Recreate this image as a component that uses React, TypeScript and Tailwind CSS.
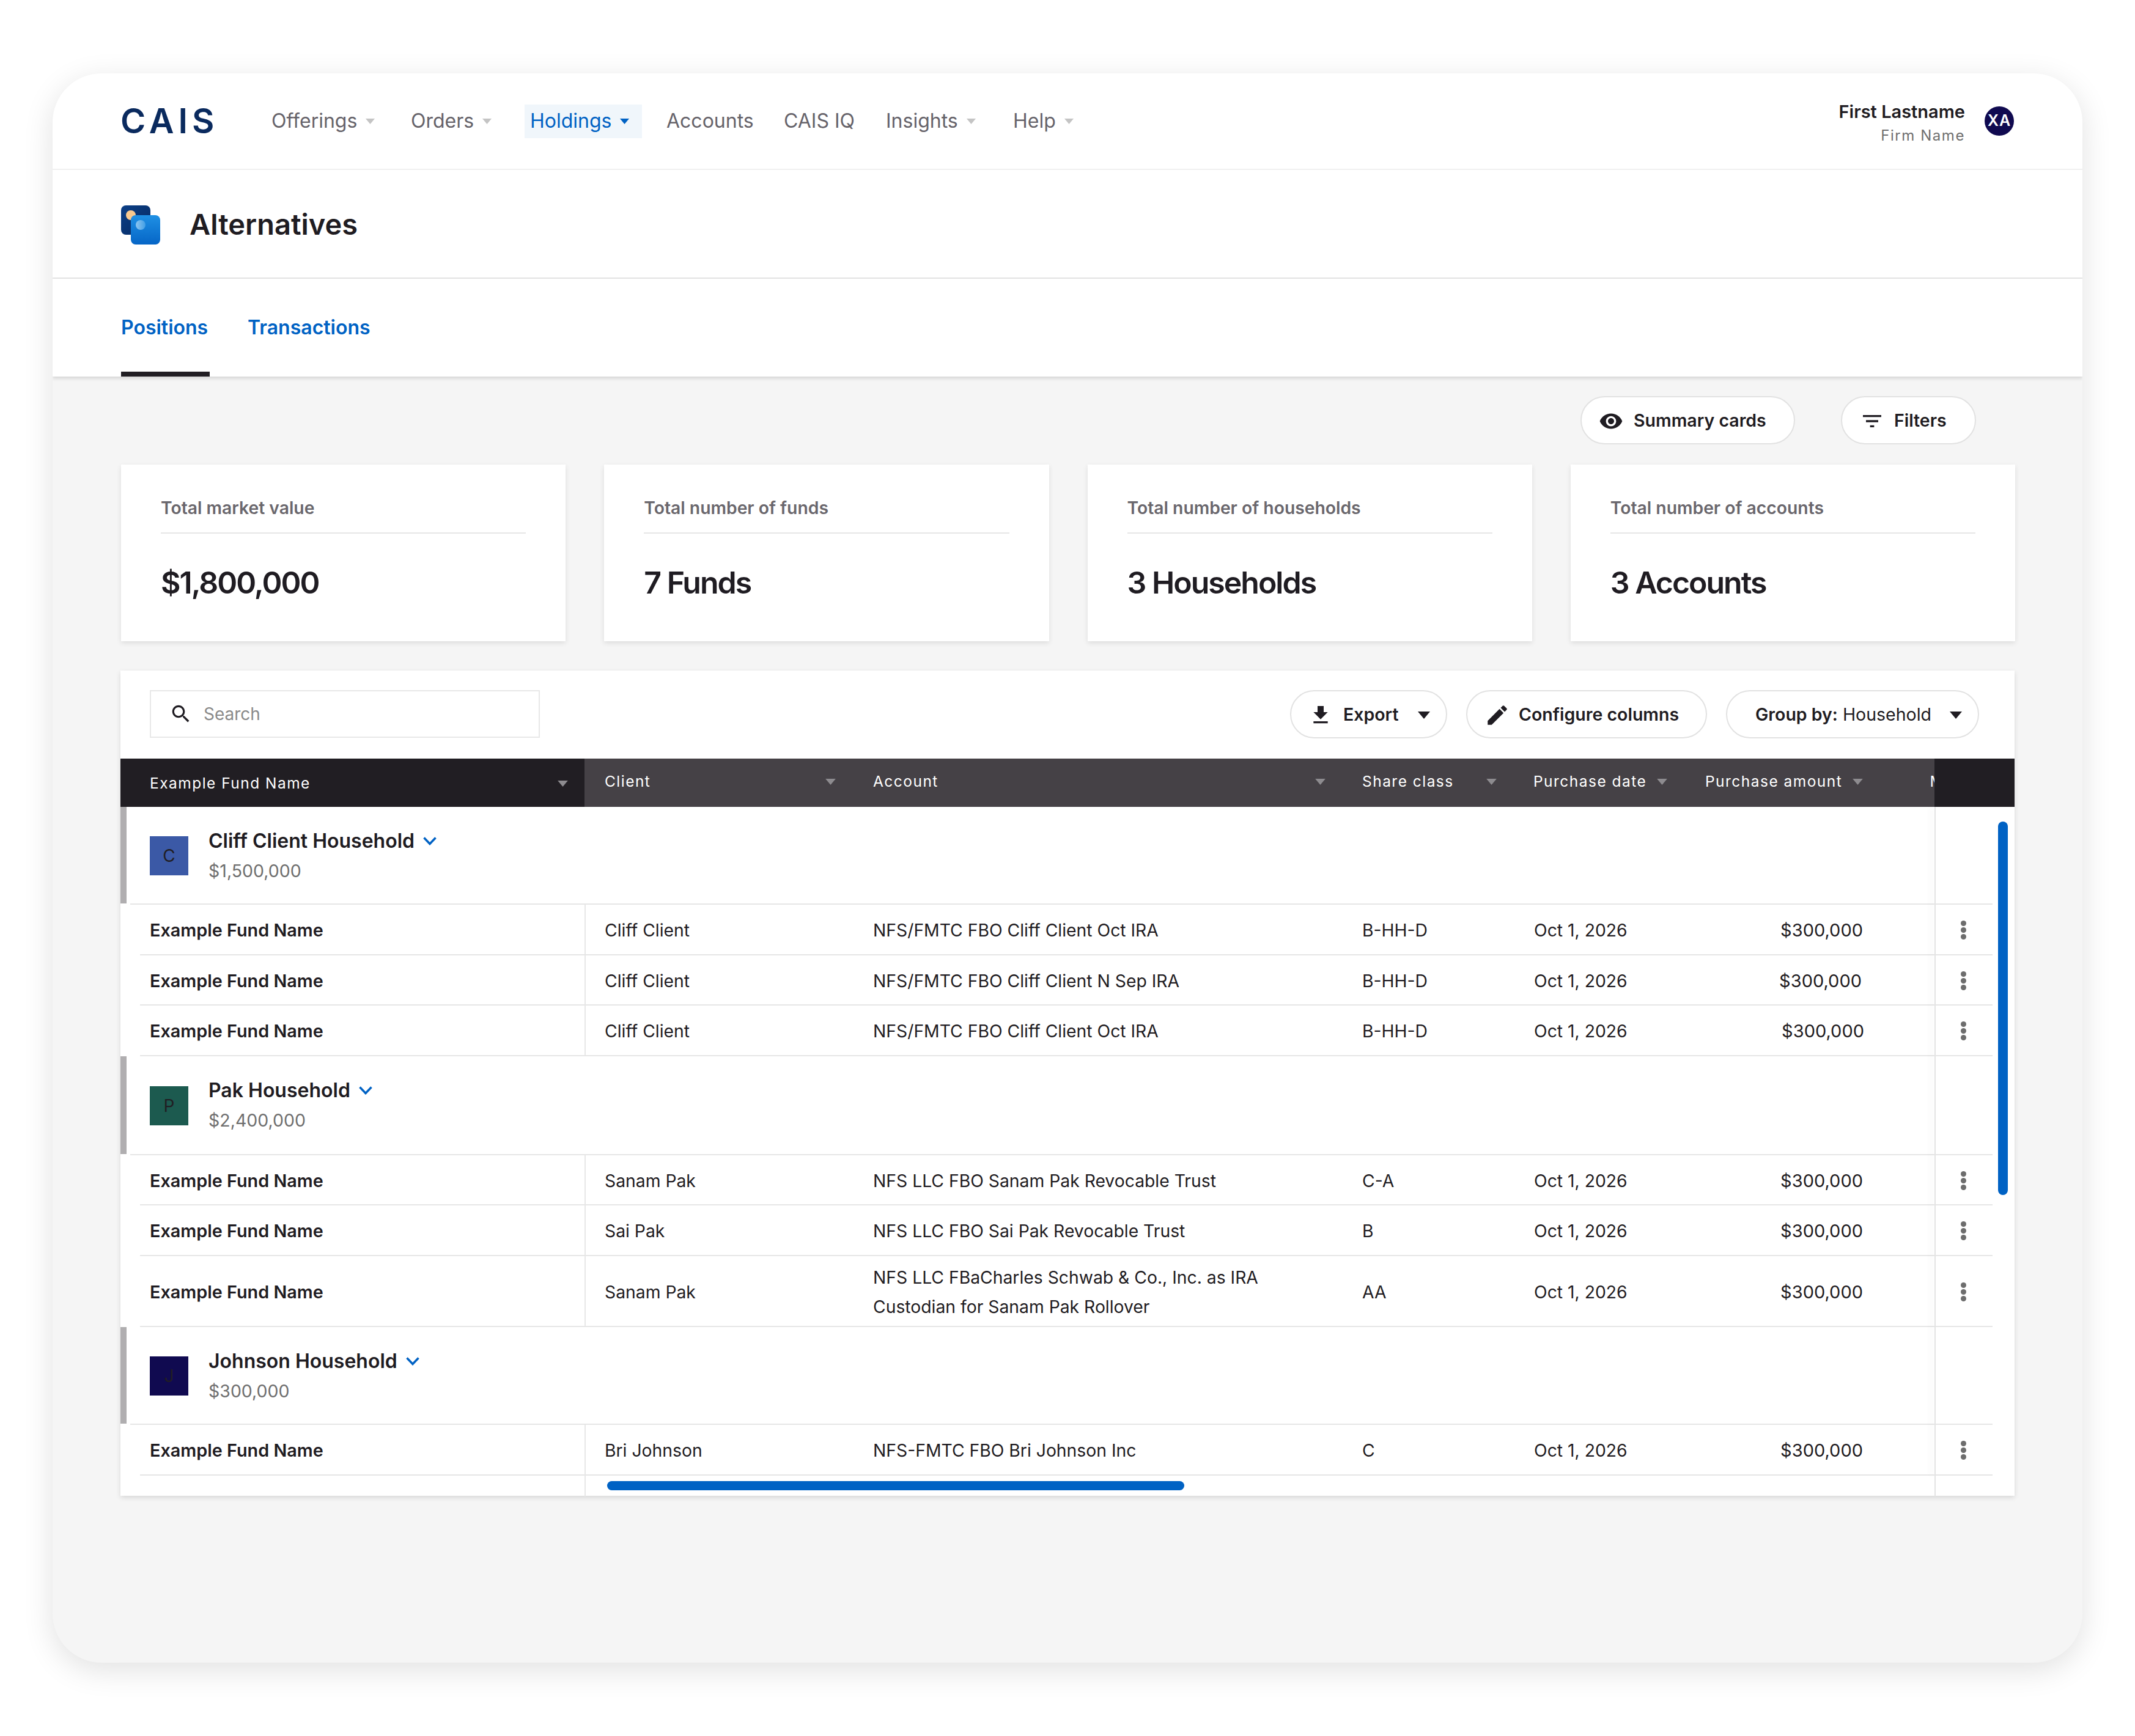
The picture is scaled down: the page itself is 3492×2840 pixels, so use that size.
import { ReactNode } from "react";

const households = [
  {
    initial: "C",
    name: "Cliff Client Household",
    total: "$1,500,000",
    swatch: "bg-[#3b59a6]",
    height: "h-[158px]",
    rows: [
      { client: "Cliff Client", account: "NFS/FMTC FBO Cliff Client Oct IRA", share: "B-HH-D" },
      {
        client: "Cliff Client",
        account: "NFS/FMTC FBO Cliff Client N Sep IRA",
        share: "B-HH-D",
        amountPad: "pr-[17px]",
      },
      {
        client: "Cliff Client",
        account: "NFS/FMTC FBO Cliff Client Oct IRA",
        share: "B-HH-D",
        amountPad: "pr-[13px]",
      },
    ],
  },
  {
    initial: "P",
    name: "Pak Household",
    total: "$2,400,000",
    swatch: "bg-[#1c5a4f]",
    height: "h-[160px]",
    rows: [
      { client: "Sanam Pak", account: "NFS LLC FBO Sanam Pak Revocable Trust", share: "C-A" },
      { client: "Sai Pak", account: "NFS LLC FBO Sai Pak Revocable Trust", share: "B" },
      {
        client: "Sanam Pak",
        account: "NFS LLC FBaCharles Schwab & Co., Inc. as IRA Custodian for Sanam Pak Rollover",
        share: "AA",
        tall: true,
      },
    ],
  },
  {
    initial: "J",
    name: "Johnson Household",
    total: "$300,000",
    swatch: "bg-[#100a50]",
    height: "h-[158px]",
    rows: [{ client: "Bri Johnson", account: "NFS-FMTC FBO Bri Johnson Inc", share: "C" }],
  },
];

const summary = [
  { label: "Total market value", value: "$1,800,000" },
  { label: "Total number of funds", value: "7 Funds" },
  { label: "Total number of households", value: "3 Households" },
  { label: "Total number of accounts", value: "3 Accounts" },
];

const rowGrid = "grid grid-cols-[759px_439px_800px_282px_255px_330px_102px_131px]";

function Caret({ className }: { className: string }) {
  return (
    <svg viewBox="0 0 10 6" className={className} fill="currentColor">
      <path d="M0 0h10L5 6z" />
    </svg>
  );
}

function Icon({ d, className }: { d: string; className: string }) {
  return (
    <svg viewBox="0 0 24 24" className={className} fill="currentColor">
      <path d={d} />
    </svg>
  );
}

function NavLink({ children, caret, active }: { children: ReactNode; caret?: boolean; active?: boolean }) {
  return (
    <div
      className={`flex h-[55px] items-center px-[9px] ${
        active ? "bg-[#f0f6fb] text-[#0062c4]" : "text-[#66636a]"
      }`}
    >
      <span>{children}</span>
      {caret && (
        <Caret className={`ml-[14px] h-[9px] w-[15px] ${active ? "text-[#0062c4]" : "text-[#c4c4c4]"}`} />
      )}
    </div>
  );
}

function HeaderCell({ label, pad, caretGap }: { label: string; pad: string; caretGap: string }) {
  return (
    <div className={`flex h-full items-center pb-[4px] ${pad}`}>
      <span className={caretGap}>{label}</span>
      <Caret className="h-[10px] w-[17px] text-[#8d8b8f]" />
    </div>
  );
}

function Pill({ children, className }: { children: ReactNode; className: string }) {
  return (
    <div
      className={`flex items-center rounded-full border-2 border-[#e2e2e2] bg-white pt-[2px] text-[28.5px] font-semibold text-[#1f1c22] ${className}`}
    >
      {children}
    </div>
  );
}

function Kebab() {
  return (
    <div className="flex flex-col items-center gap-[2px]">
      <span className="h-[9px] w-[9px] rounded-full bg-[#6d6d6d]" />
      <span className="h-[9px] w-[9px] rounded-full bg-[#6d6d6d]" />
      <span className="h-[9px] w-[9px] rounded-full bg-[#6d6d6d]" />
    </div>
  );
}

export default function App() {
  return (
    <div className="h-[2840px] w-[3492px] overflow-hidden bg-white pl-[86px] pt-[120px] font-['Inter',sans-serif] text-[#1f1c22]">
      <div className="h-[2600px] w-[3320px] overflow-hidden rounded-[80px] bg-[#f5f5f5] shadow-[0_12px_50px_rgba(0,0,0,0.12)]">
        {/* Top nav */}
        <header className="flex h-[158px] items-center border-b-2 border-[#f0f0f0] bg-white pl-[111px] pr-[112px]">
          <span className="mr-[82px] w-[156px] whitespace-nowrap text-[56px] font-semibold leading-none tracking-[0.125em] text-[#0a2a5e]">
            CAIS
          </span>
          <nav className="flex items-center text-[32px]">
            <div className="w-[228px]">
              <NavLink caret>Offerings</NavLink>
            </div>
            <div className="w-[195px]">
              <NavLink caret>Orders</NavLink>
            </div>
            <div className="w-[223px]">
              <div className="w-[192px]">
                <NavLink caret active>
                  Holdings
                </NavLink>
              </div>
            </div>
            <div className="w-[192px]">
              <NavLink>Accounts</NavLink>
            </div>
            <div className="w-[167px]">
              <NavLink>CAIS IQ</NavLink>
            </div>
            <div className="w-[208px]">
              <NavLink caret>Insights</NavLink>
            </div>
            <NavLink caret>Help</NavLink>
          </nav>
          <div className="ml-auto flex items-center">
            <div className="mr-[32px] mt-[8px] text-right">
              <div className="text-[29px] font-semibold leading-[36px]">First Lastname</div>
              <div className="mt-[3px] text-[24px] leading-[36px] tracking-[0.065em] text-[#6f6f6f]">Firm Name</div>
            </div>
            <div className="flex h-[48px] w-[48px] items-center justify-center rounded-full bg-[#100a50] text-[25px] font-semibold tracking-[0.04em] text-white">
              XA
            </div>
          </div>
        </header>

        {/* Page title */}
        <div className="flex h-[178px] items-center border-b-2 border-[#e6e6e6] bg-white pl-[112px] pt-[4px]">
          <div className="relative mr-[48px] h-[64px] w-[64px]">
            <div className="absolute left-0 top-0 h-[48px] w-[48px] overflow-hidden rounded-[8px] bg-gradient-to-br from-[#0b3f86] to-[#072a63]">
              <div className="absolute left-[8px] top-[8px] h-[16px] w-[16px] rounded-full bg-[#f8c98f]" />
            </div>
            <div className="absolute left-[16px] top-[16px] h-[48px] w-[48px] rounded-[8px] bg-gradient-to-b from-[#1f90e4] to-[#0665c6]">
              <div className="absolute left-[8px] top-[8px] h-[16px] w-[16px] rounded-full bg-gradient-to-r from-[#8cc5ef] to-[#3f9fe6]" />
            </div>
          </div>
          <h1 className="-mt-[3px] text-[47px] font-semibold leading-none">Alternatives</h1>
        </div>

        {/* Tabs */}
        <div className="relative z-10 flex h-[160px] items-start bg-white pl-[112px] pt-[60px] text-[32px] font-semibold leading-[40px] text-[#0062c4] shadow-[0_3px_6px_rgba(0,0,0,0.14)]">
          <div className="relative w-[207px]">
            Positions
            <div className="absolute left-0 top-[92px] h-[8px] w-[145px] bg-[#211e23]" />
          </div>
          <div>Transactions</div>
        </div>

        {/* Toolbar */}
        <div className="flex justify-end gap-[75px] pr-[174px] pt-[32px]">
          <Pill className="h-[79px] w-[351px] pl-[28px]">
            <Icon
              className="mr-[17px] h-[40px] w-[40px]"
              d="M12 4.5C7 4.5 2.73 7.61 1 12c1.73 4.39 6 7.5 11 7.5s9.27-3.11 11-7.5c-1.73-4.39-6-7.5-11-7.5zM12 17c-2.76 0-5-2.24-5-5s2.24-5 5-5 5 2.24 5 5-2.24 5-5 5zm0-8c-1.66 0-3 1.34-3 3s1.34 3 3 3 3-1.34 3-3-1.34-3-3-3z"
            />
            Summary cards
          </Pill>
          <Pill className="h-[79px] w-[221px] pl-[29px]">
            <Icon className="mr-[16px] h-[40px] w-[40px]" d="M10 18h4v-2h-4v2zM3 6v2h18V6H3zm3 7h12v-2H6v2z" />
            Filters
          </Pill>
        </div>

        {/* Summary cards */}
        <div className="ml-[112px] mr-[110px] mt-[33px] grid grid-cols-4 gap-[63px]">
          {summary.map((card) => (
            <div key={card.label} className="h-[289px] bg-white px-[65px] pt-[53px] shadow-[0_3px_8px_rgba(0,0,0,0.1)]">
              <div className="border-b-2 border-[#e6e6e6] pb-[22px] text-[28.3px] font-semibold leading-[36px] text-[#6a676d]">
                {card.label}
              </div>
              <div className="mt-[50px] text-[50px] font-semibold leading-[60px] tracking-[-0.04em]">{card.value}</div>
            </div>
          ))}
        </div>

        {/* Table card */}
        <div className="relative ml-[111px] mr-[111px] mt-[48px] h-[1350px] bg-white shadow-[0_3px_8px_rgba(0,0,0,0.12)]">
          <div className="flex h-[144px] items-start pl-[48px] pr-[58px] pt-[32px]">
            <div className="flex h-[78px] w-[638px] items-center border-2 border-[#e8e8e8] pl-[30px] text-[28px] text-[#8a8a8a]">
              <Icon
                className="mr-[18px] h-[38px] w-[38px] text-[#1f1c22]"
                d="M15.5 14h-.79l-.28-.27C15.41 12.59 16 11.11 16 9.5 16 5.91 13.09 3 9.5 3S3 5.91 3 9.5 5.91 16 9.5 16c1.61 0 3.09-.59 4.23-1.57l.27.28v.79l5 4.99L20.49 19l-4.99-5zm-6 0C7.01 14 5 11.99 5 9.5S7.01 5 9.5 5 14 7.01 14 9.5 11.99 14 9.5 14z"
              />
              Search
            </div>
            <div className="ml-auto flex gap-[31px]">
              <Pill className="h-[79px] w-[257px] pl-[28px]">
                <Icon className="mr-[17px] h-[40px] w-[40px]" d="M19 9h-4V3H9v6H5l7 7 7-7zM5 18v2h14v-2H5z" />
                Export
                <Caret className="ml-[31px] h-[12px] w-[20px]" />
              </Pill>
              <Pill className="h-[79px] w-[394px] pl-[28px]">
                <Icon
                  className="mr-[14px] h-[42px] w-[42px]"
                  d="M3 17.25V21h3.75L17.81 9.94l-3.75-3.75L3 17.25zM20.71 7.04c.39-.39.39-1.02 0-1.41l-2.34-2.34c-.39-.39-1.02-.39-1.41 0l-1.83 1.83 3.75 3.75 1.83-1.83z"
                />
                Configure columns
              </Pill>
              <Pill className="h-[79px] w-[414px] pl-[46px]">
                Group by:
                <span className="ml-[8px] font-normal">Household</span>
                <Caret className="ml-[30px] h-[12px] w-[20px]" />
              </Pill>
            </div>
          </div>

          {/* Column headers */}
          <div className={`${rowGrid} h-[79px] bg-[#454146] text-[24.5px] tracking-[0.06em] text-white`}>
            <div className="flex items-center justify-between bg-[#211e23] pl-[48px] pr-[27px] pt-[2px]">
              <span>Example Fund Name</span>
              <Caret className="h-[10px] w-[17px] text-[#8d8b8f]" />
            </div>
            <HeaderCell label="Client" pad="pl-[33px]" caretGap="mr-[286px]" />
            <HeaderCell label="Account" pad="pl-[33px]" caretGap="mr-[616px]" />
            <HeaderCell label="Share class" pad="pl-[33px]" caretGap="mr-[53px]" />
            <HeaderCell label="Purchase date" pad="pl-[31px]" caretGap="mr-[17px]" />
            <HeaderCell label="Purchase amount" pad="pl-[57px]" caretGap="mr-[17px]" />
            <div className="flex items-center justify-end overflow-hidden pb-[4px]">
              <span className="-mr-[16px]">M</span>
            </div>
            <div className="bg-[#211e23]" />
          </div>

          {/* Rows */}
          <div className="relative">
            {households.map((household) => (
              <div key={household.name}>
                <div className={`${rowGrid} ${household.height}`}>
                  <div className="col-span-8 flex">
                    <div className="h-full w-[10px] bg-[#b0aeb0]" />
                    <div className="ml-[38px] flex items-center pt-[2px]">
                      <div
                        className={`flex h-[64px] w-[63px] items-center justify-center text-[28px] text-[#211e23] ${household.swatch}`}
                      >
                        {household.initial}
                      </div>
                      <div className="ml-[33px]">
                        <div className="flex items-center text-[32px] font-semibold leading-[40px]">
                          {household.name}
                          <svg
                            viewBox="0 0 22 14"
                            className="ml-[14px] h-[14px] w-[22px]"
                            fill="none"
                            stroke="#0062c4"
                            strokeWidth="3.5"
                          >
                            <path d="M1.5 1.5 11 11.5l9.5-10" />
                          </svg>
                        </div>
                        <div className="mt-[9px] text-[28.5px] leading-[40px] text-[#6f6f6f]">{household.total}</div>
                      </div>
                    </div>
                  </div>
                </div>
                <div className="ml-[16px] mr-[36px] h-[2px] bg-[#e6e6e6]" />
                {household.rows.map((row, i) => (
                  <div key={i}>
                    <div className={`${rowGrid} text-[28.3px] ${row.tall ? "h-[114.5px]" : "h-[80.5px]"}`}>
                      <div className="flex items-center pl-[48px] pt-[3px] text-[28.8px] font-semibold">
                        Example Fund Name
                      </div>
                      <div className="flex items-center border-l-2 border-[#e8e8e8] pl-[31px] pt-[4px]">
                        {row.client}
                      </div>
                      <div className="flex items-center pl-[33px] pr-[100px] pt-[4px] leading-[48px]">
                        {row.account}
                      </div>
                      <div className="flex items-center pl-[33px] pt-[4px]">{row.share}</div>
                      <div className="flex items-center pl-[32px] pt-[4px]">Oct 1, 2026</div>
                      <div className={`flex items-center justify-end pt-[3px] text-[29px] ${row.amountPad ?? "pr-[15px]"}`}>
                        $300,000
                      </div>
                      <div />
                      <div className="flex items-center justify-center pr-[37px] pt-[3px]">
                        <Kebab />
                      </div>
                    </div>
                    <div className="ml-[32px] mr-[36px] h-[2px] bg-[#e6e6e6]" />
                  </div>
                ))}
              </div>
            ))}
            {/* Sticky column edge */}
            <div className="absolute bottom-0 left-[2967px] top-0 w-[2px] bg-[#e4e4e4] shadow-[-6px_0_10px_rgba(0,0,0,0.08)]" />
            {/* Vertical scrollbar */}
            <div className="absolute left-[3071px] top-[24px] h-[611px] w-[16px] rounded-full bg-[#0062c4]" />
          </div>

          {/* Horizontal scrollbar */}
          <div className={`${rowGrid} h-[34px]`}>
            <div />
            <div className="col-span-6 border-l-2 border-[#e8e8e8] pl-[35px] pt-[9px]">
              <div className="h-[15px] w-[944px] rounded-full bg-[#0062c4]" />
            </div>
            <div className="border-l-2 border-[#e4e4e4]" />
          </div>
        </div>
      </div>
    </div>
  );
}
